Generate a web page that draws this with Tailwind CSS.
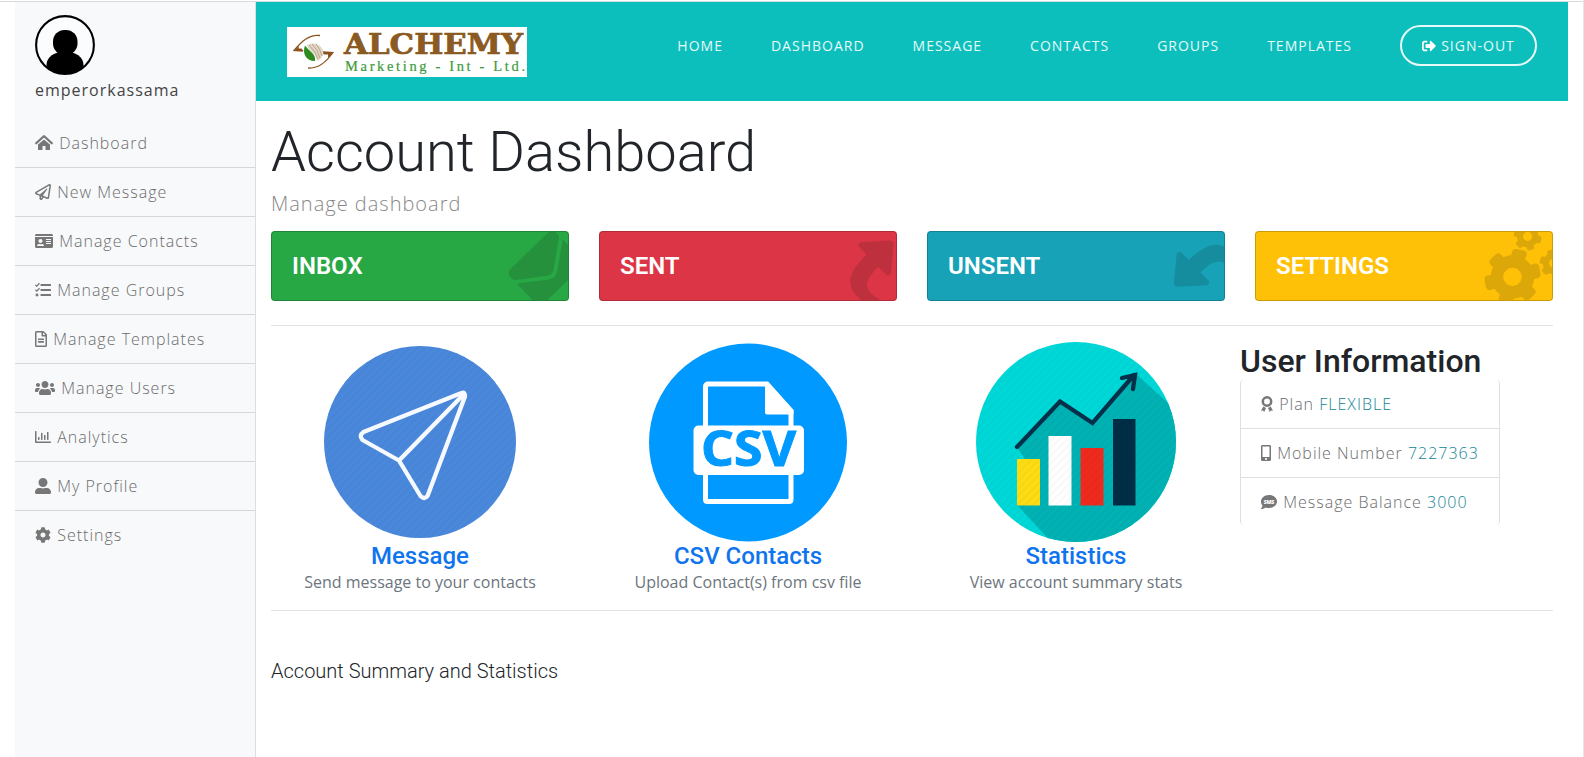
<!DOCTYPE html>
<html lang="en">
<head>
<meta charset="utf-8">
<title>Account Dashboard</title>
<script src="https://cdn.jsdelivr.net/npm/@tailwindcss/browser@4"></script>
</head>
<body class="bg-white overflow-hidden font-['Open_Sans',sans-serif] text-[#212529]">
<svg class="hidden">
  <symbol id="plane" viewBox="0 0 512 512"><path d="M440 6.5L24 246.4c-34.4 19.9-31.1 70.8 5.7 85.9L144 379.6V464c0 46.4 59.2 65.5 86.6 28.6l43.8-59.1 111.9 46.2c5.9 2.4 12.1 3.6 18.3 3.6 8.2 0 16.3-2.1 23.6-6.2 12.8-7.2 21.6-20 23.9-34.5l59.4-387.2c6.1-40.1-36.9-68.8-71.5-48.9zM192 464v-64.6l36.6 15.1L192 464zm212.6-28.7l-153.8-63.5L391 169.5c10.7-15.5-9.5-33.5-23.7-21.2L155.8 332.6 48 288 464 48l-59.4 387.3z"/></symbol>
  <g id="smallgear"><path d="M512.1 191l-8.2 14.3c-3 5.3-9.4 7.5-15.1 5.4-11.8-4.4-22.6-10.7-32.1-18.6-4.6-3.8-5.8-10.5-2.8-15.7l8.2-14.3c-6.9-8-12.3-17.3-15.9-27.4h-16.5c-6 0-11.2-4.3-12.2-10.3-2-12-2.1-24.6 0-37.1 1-6 6.2-10.4 12.2-10.4h16.5c3.6-10.1 9-19.4 15.9-27.4l-8.2-14.3c-3-5.2-1.9-11.9 2.8-15.7 9.5-7.9 20.4-14.2 32.1-18.6 5.7-2.1 12.1.1 15.1 5.4l8.2 14.3c10.5-1.9 21.2-1.9 31.7 0L552 6.3c3-5.3 9.4-7.5 15.1-5.4 11.8 4.4 22.6 10.7 32.1 18.6 4.6 3.8 5.8 10.5 2.8 15.7l-8.2 14.3c6.9 8 12.3 17.3 15.9 27.4h16.5c6 0 11.2 4.3 12.2 10.3 2 12 2.1 24.6 0 37.1-1 6-6.2 10.4-12.2 10.4h-16.5c-3.6 10.1-9 19.4-15.9 27.4l8.2 14.3c3 5.2 1.9 11.9-2.8 15.7-9.5 7.9-20.4 14.2-32.1 18.6-5.7 2.1-12.1-.1-15.1-5.4l-8.2-14.3c-10.4 1.9-21.2 1.9-31.7 0zm-10.5-58.8c38.5 29.6 82.4-14.3 52.8-52.8-38.5-29.7-82.4 14.3-52.8 52.8z"/></g>
</svg>
<div class="h-[757px] flex flex-col border-r border-[#e6e6e6]">
  <div class="h-px shrink-0"></div>
  <div class="h-px shrink-0 bg-[#d9dadb]"></div>
  <div class="flex flex-1 pl-[15px] pr-[15px]">

    <!-- sidebar -->
    <aside class="w-[241px] shrink-0 bg-[#f8f9fb] border-r border-[#dcdee1]">
      <div class="h-[117px] pl-5 pt-[13px]">
        <svg class="size-[60px] block" viewBox="0 0 60 60"><defs><clipPath id="av"><circle cx="30" cy="30" r="29"/></clipPath></defs><g clip-path="url(#av)"><circle cx="30" cy="30" r="29" fill="#fbfcfd"/><rect x="18" y="15" width="24.500" height="25" rx="11.500"/><path d="M11.500 60V50c0-8 8-13.500 18.500-13.500S48.500 42 48.500 50v10z"/></g><circle cx="30" cy="30" r="28.900" fill="none" stroke="#000" stroke-width="2.100"/></svg>
        <p class="text-base leading-6 tracking-[1px] text-[#444] mt-[3px]">emperorkassama</p>
      </div>
      <ul class="text-base font-light tracking-[1px] text-[#6b6b6b] divide-y divide-[#d5d7da] [&>li]:h-[49px] [&>li]:pl-5 [&>li]:pt-3 [&>li]:leading-6 [&_svg]:inline-block [&_svg]:h-4 [&_svg]:fill-[#777] [&_svg]:mr-px [&_svg]:align-[-2px]">
        <li><svg class="w-[18px]" viewBox="0 0 576 512"><path d="M280.370 148.260L96 300.110V464a16 16 0 0 0 16 16l112.060-.29a16 16 0 0 0 15.920-16V368a16 16 0 0 1 16-16h64a16 16 0 0 1 16 16v95.640a16 16 0 0 0 16 16.050L464 480a16 16 0 0 0 16-16V300L295.670 148.260a12.190 12.190 0 0 0-15.300 0zM571.600 251.470L318.470 13a48 48 0 0 0-61 0L4.340 251.470a12 12 0 0 0-1.600 16.900l25.500 31A12 12 0 0 0 45.150 301l235.220-213.740a12.190 12.190 0 0 1 15.300 0L530.900 301a12 12 0 0 0 16.900-1.600l25.500-31a12 12 0 0 0-1.700-16.930z"/></svg> Dashboard</li>
        <li><svg class="w-4"><use href="#plane"/></svg> New Message</li>
        <li><svg class="w-[18px]" viewBox="0 0 576 512"><path d="M528 32H48C21.500 32 0 53.500 0 80v16h576V80c0-26.500-21.500-48-48-48zM0 432c0 26.500 21.500 48 48 48h480c26.500 0 48-21.500 48-48V128H0v304zm352-232c0-4.400 3.600-8 8-8h144c4.400 0 8 3.600 8 8v16c0 4.400-3.600 8-8 8H360c-4.400 0-8-3.600-8-8v-16zm0 64c0-4.400 3.600-8 8-8h144c4.400 0 8 3.600 8 8v16c0 4.400-3.600 8-8 8H360c-4.400 0-8-3.600-8-8v-16zm0 64c0-4.400 3.600-8 8-8h144c4.400 0 8 3.600 8 8v16c0 4.400-3.600 8-8 8H360c-4.400 0-8-3.600-8-8v-16zM176 192c35.300 0 64 28.700 64 64s-28.700 64-64 64-64-28.700-64-64 28.700-64 64-64zM67.100 396.200C75.500 370.500 99.600 352 128 352h8.200c12.300 5.100 25.700 8 39.800 8s27.600-2.900 39.800-8h8.200c28.400 0 52.500 18.500 60.900 44.200 3.200 9.900-5.200 19.800-15.600 19.800H82.700c-10.400 0-18.800-10-15.600-19.800z"/></svg> Manage Contacts</li>
        <li><svg class="w-4" viewBox="0 0 512 512"><path d="M192 64h304q16 0 16 16v32q0 16-16 16H192q-16 0-16-16V80q0-16 16-16zM192 224h304q16 0 16 16v32q0 16-16 16H192q-16 0-16-16v-32q0-16 16-16zM192 384h304q16 0 16 16v32q0 16-16 16H192q-16 0-16-16v-32q0-16 16-16z"/><circle cx="64" cy="416" r="46"/><path d="M12 92l44 42 88-92M12 250l44 42 88-92" fill="none" stroke="#777" stroke-width="42"/></svg> Manage Groups</li>
        <li><svg class="w-3" viewBox="0 0 384 512"><path d="M288 248v28c0 6.600-5.400 12-12 12H108c-6.600 0-12-5.400-12-12v-28c0-6.600 5.400-12 12-12h168c6.600 0 12 5.400 12 12zm-12 72H108c-6.600 0-12 5.400-12 12v28c0 6.600 5.400 12 12 12h168c6.600 0 12-5.400 12-12v-28c0-6.600-5.400-12-12-12zm108-188.100V464c0 26.500-21.500 48-48 48H48c-26.500 0-48-21.500-48-48V48C0 21.500 21.500 0 48 0h204.100C264.800 0 277 5.100 286 14.100L369.900 98c9 8.900 14.100 21.200 14.100 33.900zm-128-80V128h76.100L256 51.900zM336 464V176H232c-13.300 0-24-10.700-24-24V48H48v416h288z"/></svg> Manage Templates</li>
        <li><svg class="w-5" viewBox="0 0 640 512"><path d="M96 224c35.300 0 64-28.700 64-64s-28.700-64-64-64-64 28.700-64 64 28.700 64 64 64zm448 0c35.300 0 64-28.700 64-64s-28.700-64-64-64-64 28.700-64 64 28.700 64 64 64zm32 32h-64c-17.600 0-33.500 7.100-45.100 18.600 40.300 22.100 68.900 62 75.100 109.400h66c17.700 0 32-14.300 32-32v-32c0-35.300-28.700-64-64-64zm-256 0c61.900 0 112-50.100 112-112S381.900 32 320 32 208 82.100 208 144s50.100 112 112 112zm76.800 32h-8.300c-20.800 10-43.900 16-68.500 16s-47.600-6-68.500-16h-8.300C179.600 288 128 339.600 128 403.200V432c0 26.500 21.500 48 48 48h288c26.500 0 48-21.500 48-48v-28.800c0-63.600-51.600-115.200-115.200-115.200zm-223.700-13.400C161.500 263.100 145.600 256 128 256H64c-35.300 0-64 28.700-64 64v32c0 17.700 14.300 32 32 32h65.900c6.300-47.400 34.900-87.300 75.200-109.400z"/></svg> Manage Users</li>
        <li><svg class="w-4" viewBox="0 0 512 512"><path d="M396.800 352h22.400c6.400 0 12.800-6.400 12.800-12.800V108.800c0-6.400-6.400-12.800-12.800-12.800h-22.400c-6.400 0-12.800 6.400-12.800 12.800v230.400c0 6.400 6.400 12.800 12.800 12.800zm-192 0h22.400c6.400 0 12.800-6.400 12.800-12.800V140.800c0-6.400-6.400-12.800-12.800-12.800h-22.400c-6.400 0-12.800 6.400-12.800 12.800v198.400c0 6.400 6.400 12.800 12.800 12.800zm96 0h22.400c6.400 0 12.800-6.400 12.800-12.800V204.800c0-6.400-6.400-12.800-12.800-12.800h-22.400c-6.400 0-12.800 6.400-12.800 12.800v134.400c0 6.400 6.400 12.800 12.800 12.800zM496 400H48V80c0-8.840-7.160-16-16-16H16C7.160 64 0 71.160 0 80v336c0 17.670 14.330 32 32 32h464c8.840 0 16-7.160 16-16v-16c0-8.840-7.160-16-16-16zm-387.200-48h22.400c6.400 0 12.800-6.400 12.800-12.800v-70.400c0-6.400-6.400-12.800-12.800-12.800h-22.400c-6.400 0-12.800 6.400-12.800 12.800v70.400c0 6.400 6.400 12.800 12.800 12.800z"/></svg> Analytics</li>
        <li><svg class="w-4" viewBox="0 0 512 512"><path d="M256 288c79.500 0 144-64.500 144-144S335.500 0 256 0 112 64.500 112 144s64.500 144 144 144zm128 32h-55.100c-22.200 10.200-46.900 16-72.900 16s-50.600-5.800-72.900-16H128C57.300 320 0 377.300 0 448v16c0 26.500 21.500 48 48 48h416c26.500 0 48-21.500 48-48v-16c0-70.700-57.300-128-128-128z"/></svg> My Profile</li>
        <li><svg class="w-4" viewBox="0 0 512 512"><path d="M487.400 315.700l-42.600-24.600c4.300-23.200 4.300-47 0-70.200l42.600-24.600c4.900-2.800 7.100-8.600 5.500-14-11.100-35.600-30-67.800-54.700-94.600-3.800-4.100-10-5.100-14.800-2.300L380.800 110c-17.900-15.400-38.500-27.300-60.800-35.100V25.800c0-5.600-3.900-10.500-9.400-11.700-36.700-8.200-74.300-7.800-109.200 0-5.500 1.200-9.400 6.100-9.400 11.700V75c-22.200 7.900-42.800 19.800-60.800 35.100L88.700 85.500c-4.900-2.800-11-1.900-14.800 2.300-24.700 26.700-43.600 58.900-54.700 94.600-1.700 5.400.6 11.200 5.500 14L67.300 221c-4.300 23.200-4.300 47 0 70.200l-42.600 24.600c-4.900 2.800-7.100 8.600-5.500 14 11.100 35.600 30 67.800 54.700 94.600 3.800 4.100 10 5.100 14.800 2.300l42.600-24.600c17.900 15.400 38.500 27.300 60.800 35.100v49.200c0 5.600 3.900 10.500 9.400 11.700 36.700 8.200 74.300 7.800 109.200 0 5.500-1.200 9.400-6.100 9.400-11.700v-49.200c22.200-7.900 42.800-19.800 60.800-35.100l42.600 24.600c4.900 2.800 11 1.900 14.800-2.300 24.700-26.700 43.600-58.900 54.700-94.600 1.500-5.500-.7-11.300-5.600-14.100zM256 336c-44.100 0-80-35.900-80-80s35.900-80 80-80 80 35.900 80 80-35.900 80-80 80z"/></svg> Settings</li>
      </ul>
    </aside>

    <main class="w-[1312px] shrink-0">
      <!-- top navigation -->
      <header class="h-[99px] bg-[#0cbfbc] pl-[31px] pr-[31px] flex items-start justify-between">
        <svg class="w-60 h-[50px] mt-[25px]" viewBox="0 0 240 50">
          <rect width="240" height="50" fill="#fff"/>
          <path d="M33 8.500C22 7 14 15 7 23.500l9 .5" fill="none" stroke="#8a5220" stroke-width="1.300"/>
          <path d="M12 18.500L7 24h9.500l-2-2.500h-3z" fill="#8a5220"/>
          <path d="M21 41C32 42 40 34 46 25.500l-10-.5" fill="none" stroke="#8a5220" stroke-width="1.300"/>
          <path d="M41 31l5.500-6H35l2 2.500h4z" fill="#8a5220"/>
          <path d="M18 18.500c-3 8 1 15.500 10 15.500 1-7-5-9-10-15.500z" fill="#2c8a1e"/>
          <path d="M20 18c7-3 13-1 16 5 1 5-2 10-6 11-1-8-8-9-10-16z" fill="#e2d8ca"/>
          <path d="M22 18q7 7 9 14M25 17q6 6 8 14M29 17q4 5 6 12" stroke="#a8896a" stroke-width=".7" fill="none"/>
          <text x="57" y="27" font-family="DejaVu Serif, serif" font-weight="700" font-size="28.500" textLength="179" lengthAdjust="spacingAndGlyphs" fill="#8b5a22" stroke="#8b5a22" stroke-width=".7">ALCHEMY</text>
          <text x="58" y="44" font-family="Liberation Serif, serif" font-size="14.500" textLength="180" fill="#3c9a3c" stroke="#3c9a3c" stroke-width=".2">Marketing - Int - Ltd.</text>
        </svg>
        <nav class="flex items-center gap-12 mt-[23px] h-[41px] text-sm tracking-[1px] text-white/90 font-medium">
          <a>HOME</a><a>DASHBOARD</a><a>MESSAGE</a><a>CONTACTS</a><a>GROUPS</a><a>TEMPLATES</a>
          <a class="h-[41px] w-[137px] border-2 border-white/90 rounded-full flex items-center justify-center gap-[5px]"><svg class="size-[14px] fill-white" viewBox="0 0 512 512"><path d="M497 273L329 441c-15 15-41 4.500-41-17v-96H152c-13.300 0-24-10.700-24-24v-96c0-13.300 10.700-24 24-24h136V88c0-21.400 25.900-32 41-17l168 168c9.300 9.400 9.300 24.600 0 34zM192 436v-40c0-6.600-5.400-12-12-12H96c-17.700 0-32-14.300-32-32V160c0-17.700 14.300-32 32-32h84c6.600 0 12-5.400 12-12V76c0-6.600-5.400-12-12-12H96c-53 0-96 43-96 96v192c0 53 43 96 96 96h84c6.600 0 12-5.400 12-12z"/></svg><span>SIGN-OUT</span></a>
        </nav>
      </header>

      <div class="px-[15px]">
        <h1 class="font-['Roboto',sans-serif] font-light text-[56px] leading-[67px] pt-[18px]">Account Dashboard</h1>
        <p class="text-xl font-light tracking-[1px] leading-[30px] mt-[3px] text-[#888]">Manage dashboard</p>

        <div class="grid grid-cols-4 gap-[30px] mt-3 font-['Roboto',sans-serif] font-semibold text-2xl text-white [&>div]:h-[70px] [&>div]:rounded [&>div]:border [&>div]:border-black/20 [&>div]:bg-clip-border [&>div]:relative [&>div]:overflow-hidden [&>div]:pl-5 [&>div]:flex [&>div]:items-center [&_svg]:absolute [&_svg]:-right-2.5 [&_svg]:bottom-0 [&_svg]:h-16 [&_svg]:-rotate-44 [&_svg]:fill-[#141414]/15">
          <div class="bg-[#28a745]">INBOX<svg class="w-16" viewBox="0 0 512 512"><path d="M502.300 190.800c3.900-3.100 9.700-.2 9.700 4.700V400c0 26.500-21.500 48-48 48H48c-26.500 0-48-21.500-48-48V195.600c0-5 5.700-7.800 9.700-4.700 22.400 17.400 52.100 39.500 154.100 113.600 21.100 15.400 56.700 47.800 92.200 47.600 35.700.3 72-32.800 92.300-47.600 102-74.100 131.600-96.300 154-113.700zM256 320c23.200.4 56.600-29.200 73.400-41.400 132.700-96.300 142.800-104.700 173.400-128.700 5.800-4.500 9.200-11.500 9.200-18.900v-19c0-26.500-21.500-48-48-48H48c-26.500 0-48 21.500-48 48v19c0 7.400 3.400 14.300 9.200 18.900 30.600 23.900 40.700 32.400 173.400 128.700 16.800 12.200 50.200 41.800 73.400 41.400z"/></svg></div>
          <div class="bg-[#dc3545]">SENT<svg class="w-16" viewBox="0 0 512 512"><path d="M503.691 189.836L327.687 37.851C312.281 24.546 288 35.347 288 56.015v80.053C127.371 137.907 0 170.100 0 322.326c0 61.441 39.581 122.309 83.333 154.132 13.653 9.931 33.111-2.533 28.077-18.631C66.066 312.814 132.917 274.316 288 272.085V360c0 20.700 24.300 31.453 39.687 18.164l176.004-152c11.071-9.562 11.086-26.753 0-36.328z"/></svg></div>
          <div class="bg-[#17a2b8]">UNSENT<svg class="w-16" viewBox="0 0 512 512"><path d="M8.309 189.836L184.313 37.851C199.719 24.546 224 35.347 224 56.015v80.053c160.629 1.839 288 34.032 288 186.258 0 61.441-39.581 122.309-83.333 154.132-13.653 9.931-33.111-2.533-28.077-18.631 45.344-145.012-21.507-183.510-176.590-185.742V360c0 20.700-24.300 31.453-39.687 18.164l-176.004-152c-11.071-9.562-11.086-26.753 0-36.328z"/></svg></div>
          <div class="bg-[#ffc107]">SETTINGS<svg class="w-20" viewBox="0 0 640 512"><use href="#smallgear"/><use href="#smallgear" y="299"/><path d="M386.300 286.100l33.700 16.800c10.100 5.800 14.500 18.100 10.500 29.100-8.900 24.200-26.400 46.400-42.600 65.800-7.400 8.900-20.200 11.100-30.300 5.300l-29.100-16.800c-16 13.700-34.600 24.600-54.900 31.700v33.600c0 11.600-8.300 21.600-19.700 23.600-24.600 4.200-50.400 4.400-75.900 0-11.500-2-20-11.900-20-23.600V418c-20.300-7.200-38.900-18-54.900-31.700L74 403c-10 5.800-22.900 3.600-30.300-5.300-16.200-19.400-33.300-41.600-42.200-65.700-4-10.900.4-23.200 10.500-29.100l33.300-16.800c-3.900-20.900-3.900-42.400 0-63.400L12 205.800c-10.100-5.800-14.600-18.100-10.500-29 8.900-24.200 26-46.400 42.200-65.800 7.400-8.900 20.200-11.100 30.300-5.300l29.100 16.800c16-13.700 34.600-24.600 54.900-31.700V57.100c0-11.500 8.200-21.500 19.600-23.500 24.600-4.200 50.500-4.400 76-.1 11.500 2 20 11.900 20 23.600v33.600c20.300 7.200 38.900 18 54.900 31.700l29.100-16.800c10-5.800 22.900-3.600 30.300 5.300 16.200 19.400 33.200 41.600 42.100 65.800 4 10.900.1 23.200-10 29.100l-33.700 16.800c3.900 21 3.900 42.500 0 63.500zm-117.600 21.100c59.200-77-28.700-164.900-105.700-105.700-59.200 77 28.700 164.900 105.700 105.700z"/></svg></div>
        </div>
        <hr class="mt-6 border-[#e3e3e3]">
      </div>

      <!-- feature tiles and user details -->
      <div class="grid grid-cols-4 h-[284px]">
        <div class="flex flex-col items-center pt-4">
          <svg class="size-[200px] shrink-0" viewBox="0 0 200 200">
            <defs><pattern id="st" width="5.500" height="8" patternUnits="userSpaceOnUse" patternTransform="rotate(45)"><rect width="2.500" height="8" fill="#000" opacity=".025"/></pattern></defs>
            <circle cx="100" cy="100" r="96" fill="#4a88dc"/><circle cx="100" cy="100" r="96" fill="url(#st)"/>
            <path d="M141.500 51.100L43.500 90q-5 3.500-1 8l36.500 20.500L100.500 154q4 4 7 0L145 54.500q0-5-3.500-3.400zM79 118.500L143.500 52.500" fill="none" stroke="#f6faff" stroke-width="4.300" stroke-linejoin="round"/>
          </svg>
          <h4 class="font-['Roboto',sans-serif] font-medium text-2xl leading-[29px] text-[#0f74ee]">Message</h4>
          <p class="text-base leading-6 -mt-px text-[#6c757d]">Send message to your contacts</p>
        </div>
        <div class="flex flex-col items-center pt-4">
          <svg class="size-[200px] shrink-0" viewBox="0 0 200 200">
            <circle cx="100" cy="100.500" r="99" fill="#0099ff"/>
            <path d="M57.500 90V45q0-3 3-3H119l24 27v22M57.500 126v31.500q0 2 2 2H141q2 0 2-2V126" fill="none" stroke="#fff" stroke-width="5"/>
            <path d="M117 40h3l25.500 28v4.500H119q-2 0-2-2z" fill="#fff"/>
            <rect x="45.500" y="83.500" width="110.500" height="49.500" rx="5" fill="#fff"/>
            <text x="53" y="124" font-family="Open Sans, sans-serif" font-weight="700" font-size="49" textLength="95" lengthAdjust="spacingAndGlyphs" fill="#0099ff" stroke="#0099ff" stroke-width="1">CSV</text>
          </svg>
          <h4 class="font-['Roboto',sans-serif] font-medium text-2xl leading-[29px] text-[#0f74ee]">CSV Contacts</h4>
          <p class="text-base leading-6 -mt-px text-[#6c757d]">Upload Contact(s) from csv file</p>
        </div>
        <div class="flex flex-col items-center pt-4">
          <svg class="size-[200px] shrink-0" viewBox="0 0 200 200">
            <defs><clipPath id="sc"><circle cx="100" cy="100" r="100"/></clipPath></defs>
            <g clip-path="url(#sc)">
              <rect width="200" height="200" fill="#00d8d8"/>
              <path d="M41 105L84 60l33 21 43-49 50 45v130H82l-41-44 8-46z" fill="#00b2b4"/>
              <rect x="41" y="117" width="23" height="46.500" fill="#fddc13"/>
              <rect x="72.500" y="94" width="23" height="69.500" fill="#fff"/>
              <rect x="104.500" y="106" width="23" height="57.500" fill="#ee2a1d"/>
              <rect x="137" y="77" width="22.500" height="86.500" fill="#002e47"/>
              <rect width="200" height="200" fill="url(#st)"/>
              <path d="M41 105L84 59.500l32.500 21.500L158 33M146 36l13-3-2 14" fill="none" stroke="#04304a" stroke-width="4.300" stroke-linecap="round"/>
            </g>
          </svg>
          <h4 class="font-['Roboto',sans-serif] font-medium text-2xl leading-[29px] text-[#0f74ee]">Statistics</h4>
          <p class="text-base leading-6 -mt-px text-[#6c757d]">View account summary stats</p>
        </div>
        <div class="pt-4">
          <h2 class="font-['Roboto',sans-serif] font-medium text-[32px] leading-[38px]">User Information</h2>
          <ul class="w-[260px] h-[145px] border-x border-[#dfdfdf] rounded text-base font-light tracking-[1px] text-[#6b6b6b] divide-y divide-[#dfdfdf] [&>li]:h-[49px] [&>li]:pl-5 [&>li]:pt-3 [&>li]:leading-6 [&_svg]:inline-block [&_svg]:h-4 [&_svg]:fill-[#777] [&_svg]:mr-px [&_svg]:align-[-2px] [&_span]:text-[#138496]">
            <li><svg class="w-3" viewBox="0 0 12 16"><circle cx="6" cy="5.500" r="4.200" fill="none" stroke="#777" stroke-width="2.500"/><path d="M2.300 10.500L0 14.700l2-.2 1.200 1.500L5 12zM9.700 10.500l2.300 4.200-2-.2L8.800 16 7 12z"/></svg> Plan <span>FLEXIBLE</span></li>
            <li><svg class="w-2.5" viewBox="0 0 320 512"><path d="M272 0H48C21.500 0 0 21.500 0 48v416c0 26.500 21.500 48 48 48h224c26.500 0 48-21.500 48-48V48c0-26.500-21.500-48-48-48zM160 480c-17.700 0-32-14.300-32-32s14.300-32 32-32 32 14.300 32 32-14.300 32-32 32zm112-108c0 6.600-5.400 12-12 12H60c-6.600 0-12-5.400-12-12V60c0-6.600 5.400-12 12-12h200c6.600 0 12 5.400 12 12v312z"/></svg> Mobile Number <span>7227363</span></li>
            <li><svg class="w-4" viewBox="0 0 16 16"><path d="M8 1c4.400 0 8 2.900 8 6.500S12.400 14 8 14c-1.200 0-2.300-.2-3.300-.6C3.600 14.200 2 15 .3 15c-.3 0-.4-.4-.2-.6.500-.5 1.200-1.600 1.400-2.700C.6 10.500 0 9.100 0 7.500 0 3.900 3.600 1 8 1z"/><text x="2.700" y="9.500" font-family="Open Sans, sans-serif" font-weight="800" font-size="5.200" letter-spacing="0" textLength="10.600" style="fill:#fff">SMS</text></svg> Message Balance <span>3000</span></li>
          </ul>
        </div>
      </div>

      <div class="px-[15px]">
        <hr class="border-[#e3e3e3]">
        <h5 class="font-['Roboto',sans-serif] font-light text-xl leading-6 mt-12">Account Summary and Statistics</h5>
      </div>
    </main>
  </div>
</div>
</body>
</html>
